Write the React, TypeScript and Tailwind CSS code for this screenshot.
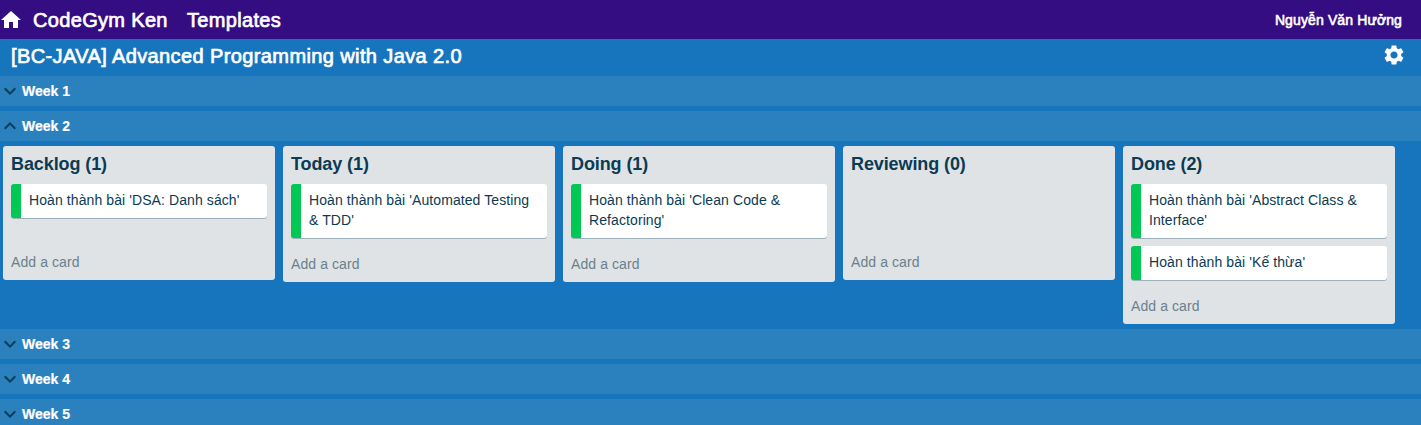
import { MdExpandLess, MdExpandMore, MdHome, MdSettings } from "react-icons/md";

type ListData = { title: string; cards: string[] };

const lists: ListData[] = [
  { title: "Backlog", cards: ["Hoàn thành bài 'DSA: Danh sách'"] },
  { title: "Today", cards: ["Hoàn thành bài 'Automated Testing & TDD'"] },
  { title: "Doing", cards: ["Hoàn thành bài 'Clean Code & Refactoring'"] },
  { title: "Reviewing", cards: [] },
  {
    title: "Done",
    cards: ["Hoàn thành bài 'Abstract Class & Interface'", "Hoàn thành bài 'Kế thừa'"],
  },
];

function Header() {
  return (
    <header className="flex h-[39px] shrink-0 items-center bg-[#330d81] pr-[19px] text-white">
      <MdHome className="-ml-px size-6 shrink-0" />
      <nav className="ml-2.5 flex text-[20px] leading-6 tracking-[0.33px] [-webkit-text-stroke:0.7px_white]">
        <a className="w-[154px] whitespace-nowrap">CodeGym Ken</a>
        <a>Templates</a>
      </nav>
      <span className="ml-auto text-[14px] leading-5 tracking-[0.12px] [-webkit-text-stroke:0.6px_white]">
        Nguyễn Văn Hưởng
      </span>
    </header>
  );
}

function BoardBar() {
  return (
    <div className="flex h-[37px] shrink-0 justify-between pt-1 pr-[15px] pl-[11px] text-white">
      <h1 className="mt-px text-[20px] leading-6 tracking-[0.39px] [-webkit-text-stroke:0.7px_white]">
        [BC-JAVA] Advanced Programming with Java 2.0
      </h1>
      <MdSettings className="size-6" />
    </div>
  );
}

function WeekRow({ name, open = false }: { name: string; open?: boolean }) {
  const Icon = open ? MdExpandLess : MdExpandMore;
  return (
    <div className="mb-[5px] flex h-[30px] shrink-0 items-center bg-[#2b80be]">
      <Icon className="-ml-0.5 size-6 text-[#093d58]" />
      <span className="text-[14px] leading-5 font-bold text-white [-webkit-text-stroke:0.2px_white]">{name}</span>
    </div>
  );
}

function Card({ text }: { text: string }) {
  return (
    <div className="mb-2 rounded-[3px] border-l-[10px] border-[#00c853] bg-white px-2 pt-1.5 pb-2 text-[14px] leading-5 tracking-[0.09px] text-[#0b3b53] shadow-[0_1px_0_#9fb1bd]">
      {text}
    </div>
  );
}

function List({ title, cards }: ListData) {
  return (
    <section className="w-[272px] shrink-0 rounded-[3px] bg-[#dfe3e6] px-2">
      <h2 className="h-[38px] pt-2 text-[18px] leading-5 font-bold tracking-[-0.1px] text-[#0b3b53]">
        {title} ({cards.length})
      </h2>
      <div className="flow-root min-h-[60px]">
        {cards.map((card) => (
          <Card key={card} text={card} />
        ))}
      </div>
      <div className="h-9 pt-2 text-[14px] leading-5 tracking-[0.09px] text-[#6b808c]">Add a card</div>
    </section>
  );
}

export default function App() {
  return (
    <div className="flex h-[425px] flex-col overflow-hidden bg-[#1775bd] font-['Liberation_Sans',Arial,sans-serif]">
      <Header />
      <BoardBar />
      <WeekRow name="Week 1" />
      <WeekRow name="Week 2" open />
      <div className="mb-[5px] flex shrink-0 items-start gap-2 pl-[3px]">
        {lists.map((list) => (
          <List key={list.title} {...list} />
        ))}
      </div>
      <WeekRow name="Week 3" />
      <WeekRow name="Week 4" />
      <WeekRow name="Week 5" />
    </div>
  );
}
